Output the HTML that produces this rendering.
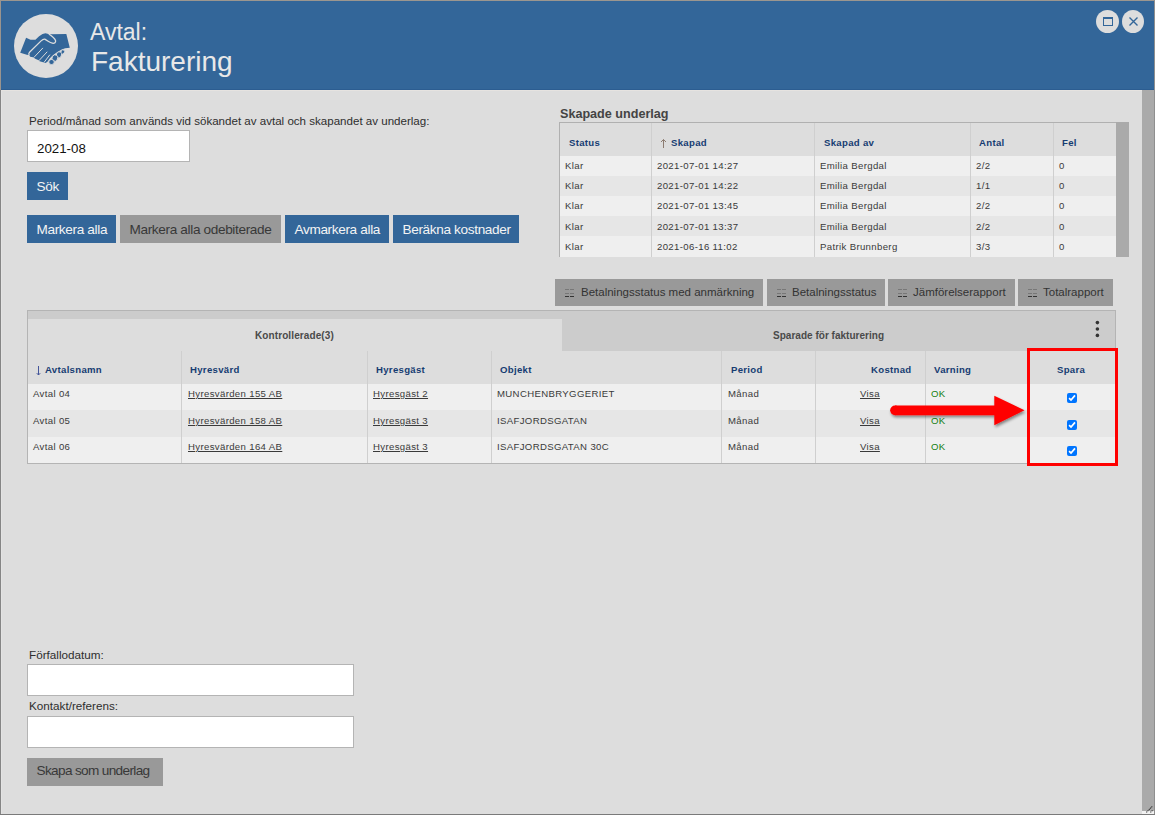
<!DOCTYPE html>
<html><head><meta charset="utf-8">
<style>
*{margin:0;padding:0;box-sizing:border-box}
html,body{width:1155px;height:815px;overflow:hidden;background:#dddddd;font-family:"Liberation Sans",sans-serif}
.a{position:absolute}
.t{position:absolute;white-space:nowrap;line-height:1}
.btn{position:absolute;top:215px;height:28px;background:#336699;color:#f4f4f4;font-size:13.6px;letter-spacing:-0.35px;line-height:29px;padding-left:9.5px;white-space:nowrap}
.gbtn{background:#999999;color:#383838}
.th{position:absolute;font-size:9.6px;letter-spacing:0.3px;font-weight:bold;color:#163c72;white-space:nowrap;line-height:1}
.td{position:absolute;font-size:9.6px;letter-spacing:0.35px;color:#3a3a3a;white-space:nowrap;line-height:1}
.lnk{text-decoration:underline}
.vs{position:absolute;width:1px;background:#cfcfcf}
</style></head>
<body>
<!-- window frame -->
<div class="a" style="left:0;top:0;width:1155px;height:1px;background:#9c968f"></div>
<div class="a" style="left:0;top:0;width:1px;height:90px;background:#9a948e"></div><div class="a" style="left:0;top:90px;width:1px;height:725px;background:#858585"></div><div class="a" style="left:1px;top:91px;width:1px;height:723px;background:#e3e3e3"></div>
<div class="a" style="left:1154px;top:0;width:1px;height:815px;background:#8f8f8f"></div>
<div class="a" style="left:0;top:814px;width:1155px;height:1px;background:#7a7a7a"></div>
<!-- header -->
<div class="a" style="left:1px;top:1px;width:1153px;height:89px;background:#336699"></div>
<div class="a" style="left:1px;top:89px;width:1153px;height:1px;background:#2c5d91"></div>
<div class="a" style="left:1px;top:90px;width:1141px;height:1px;background:#e6e3e0"></div>
<div class="a" style="left:14px;top:14px;width:64px;height:64px;border-radius:50%;background:#dddddd"></div>
<svg class="a" style="left:18px;top:28px" width="56" height="40" viewBox="0 0 1141 815">
<path d="M165 200 L255 240 L355 238 L430 170 L500 120 L560 105 L620 120 L660 128 L985 122 L1055 400 L960 415 L890 440 L800 490 L710 555 L650 615 L600 690 L560 715 L530 705 L440 675 L420 655 L340 620 L330 600 L250 585 L225 550 L180 545 L45 505 Z" fill="#336699"/>
<g fill="#336699" stroke="#dddddd" stroke-width="18">
<ellipse cx="910" cy="490" rx="36" ry="48" transform="rotate(35 910 490)"/>
<ellipse cx="834" cy="548" rx="52" ry="68" transform="rotate(30 834 548)"/>
<ellipse cx="752" cy="612" rx="58" ry="68" transform="rotate(30 752 612)"/>
<ellipse cx="683" cy="693" rx="56" ry="52"/>
</g>
<g fill="none" stroke="#dddddd" stroke-linecap="round">
<path d="M635 128 C690 165 750 215 765 255 C775 290 745 318 700 310 C650 300 600 255 545 228 C520 222 500 235 470 262 L240 490 C225 505 215 530 225 548" stroke-width="26"/>
<path d="M502 412 L335 588" stroke-width="20"/>
<path d="M590 490 L430 662" stroke-width="20"/>
<path d="M645 550 L535 695" stroke-width="20"/>
</g>
</svg>
<div class="t" style="left:90px;top:21px;font-size:23px;color:#e8e8e8">Avtal:</div>
<div class="t" style="left:91px;top:47.6px;font-size:28px;color:#e8e8e8">Fakturering</div>
<!-- window buttons -->
<div class="a" style="left:1096px;top:10px;width:23px;height:23px;border-radius:50%;background:#dddddd"></div>
<div class="a" style="left:1103px;top:17px;width:10px;height:9px;border:1px solid #336699;border-top-width:2px"></div>
<div class="a" style="left:1122px;top:10px;width:22px;height:23px;border-radius:50%;background:#dddddd"></div>
<svg class="a" style="left:1128px;top:16px" width="11" height="11" viewBox="0 0 11 11"><path d="M1.5 1.5L9.5 9.5M9.5 1.5L1.5 9.5" stroke="#336699" stroke-width="1.35"/></svg>
<!-- scrollbar -->
<div class="a" style="left:1142px;top:90px;width:12px;height:721px;background:#aaaaaa"></div>
<div class="a" style="left:1142px;top:811px;width:12px;height:3px;background:#f2f2f2"></div>
<svg class="a" style="left:1140px;top:800px" width="15" height="15" viewBox="1140 800 15 15"><path d="M1146.3 812.4L1152.6 806.1M1150.4 812.4L1152.6 810.2" stroke="#3a3a3a" stroke-width="1.1" stroke-dasharray="1.2 0.6"/></svg>

<!-- top-left form -->
<div class="t" style="left:29px;top:116px;font-size:11.57px;color:#2e2e2e">Period/månad som används vid sökandet av avtal och skapandet av underlag:</div>
<div class="a" style="left:27px;top:130px;width:163px;height:32px;background:#fff;border:1px solid #b4b4b4"></div>
<div class="t" style="left:37px;top:141.5px;font-size:13.3px;color:#111">2021-08</div>
<div class="btn" style="left:27px;top:172px;width:41px">Sök</div>
<div class="btn" style="left:27px;width:89px">Markera alla</div>
<div class="btn gbtn" style="left:120px;width:161px">Markera alla odebiterade</div>
<div class="btn" style="left:285px;width:104px">Avmarkera alla</div>
<div class="btn" style="left:393px;width:126px">Beräkna kostnader</div>

<!-- Skapade underlag -->
<div class="t" style="left:560px;top:107.5px;font-size:12.6px;font-weight:bold;color:#444">Skapade underlag</div>
<div class="a" style="left:559px;top:122px;width:570px;height:135px;background:#dddddd;border-top:1px solid #b0b0b0;border-left:1px solid #b0b0b0"></div>
<div class="a" style="left:560px;top:156px;width:556px;height:20px;background:#efefef"></div>
<div class="a" style="left:560px;top:176px;width:556px;height:20px;background:#e6e6e6"></div>
<div class="a" style="left:560px;top:196px;width:556px;height:20px;background:#efefef"></div>
<div class="a" style="left:560px;top:216px;width:556px;height:20px;background:#e6e6e6"></div>
<div class="a" style="left:560px;top:236px;width:556px;height:21px;background:#efefef"></div>
<div class="vs" style="left:651px;top:123px;height:134px"></div>
<div class="vs" style="left:814px;top:123px;height:134px"></div>
<div class="vs" style="left:970px;top:123px;height:134px"></div>
<div class="vs" style="left:1053px;top:123px;height:134px"></div>
<div class="a" style="left:1116px;top:122px;width:13px;height:135px;background:#aaaaaa"></div>
<div class="th" style="left:569px;top:138px">Status</div>
<svg class="a" style="left:659px;top:138px" width="9" height="11" viewBox="0 0 9 11"><path d="M4.5 1.5V10M2 4L4.5 1.5L7 4" stroke="#8c7b70" stroke-width="1" fill="none"/></svg>
<div class="th" style="left:671px;top:138px">Skapad</div>
<div class="th" style="left:824px;top:138px">Skapad av</div>
<div class="th" style="left:979px;top:138px">Antal</div>
<div class="th" style="left:1062px;top:138px">Fel</div>
<div class="td" style="left:565px;top:161px">Klar</div>
<div class="td" style="left:657px;top:161px">2021-07-01 14:27</div>
<div class="td" style="left:820px;top:161px">Emilia Bergdal</div>
<div class="td" style="left:976px;top:161px">2/2</div>
<div class="td" style="left:1059px;top:161px">0</div>
<div class="td" style="left:565px;top:181px">Klar</div>
<div class="td" style="left:657px;top:181px">2021-07-01 14:22</div>
<div class="td" style="left:820px;top:181px">Emilia Bergdal</div>
<div class="td" style="left:976px;top:181px">1/1</div>
<div class="td" style="left:1059px;top:181px">0</div>
<div class="td" style="left:565px;top:201px">Klar</div>
<div class="td" style="left:657px;top:201px">2021-07-01 13:45</div>
<div class="td" style="left:820px;top:201px">Emilia Bergdal</div>
<div class="td" style="left:976px;top:201px">2/2</div>
<div class="td" style="left:1059px;top:201px">0</div>
<div class="td" style="left:565px;top:222px">Klar</div>
<div class="td" style="left:657px;top:222px">2021-07-01 13:37</div>
<div class="td" style="left:820px;top:222px">Emilia Bergdal</div>
<div class="td" style="left:976px;top:222px">2/2</div>
<div class="td" style="left:1059px;top:222px">0</div>
<div class="td" style="left:565px;top:242px">Klar</div>
<div class="td" style="left:657px;top:242px">2021-06-16 11:02</div>
<div class="td" style="left:820px;top:242px">Patrik Brunnberg</div>
<div class="td" style="left:976px;top:242px">3/3</div>
<div class="td" style="left:1059px;top:242px">0</div>

<!-- report buttons -->
<div class="a" style="left:555px;top:279px;width:208px;height:27px;background:#999999"></div>
<div class="a" style="left:767px;top:279px;width:118px;height:27px;background:#999999"></div>
<div class="a" style="left:888px;top:279px;width:127px;height:27px;background:#999999"></div>
<div class="a" style="left:1018px;top:279px;width:95px;height:27px;background:#999999"></div>
<div class="t" style="left:581px;top:287px;font-size:11.5px;color:#333">Betalningsstatus med anmärkning</div>
<div class="t" style="left:792px;top:287px;font-size:11.5px;color:#333">Betalningsstatus</div>
<div class="t" style="left:913px;top:287px;font-size:11.5px;color:#333">Jämförelserapport</div>
<div class="t" style="left:1043px;top:287px;font-size:11.5px;color:#333">Totalrapport</div>
<div class="a" style="left:565px;top:289px;width:4px;height:1px;background:#777"></div><div class="a" style="left:565px;top:293px;width:4px;height:1px;background:#777"></div><div class="a" style="left:565px;top:296px;width:4px;height:1px;background:#333"></div><div class="a" style="left:570px;top:289px;width:4px;height:1px;background:#777"></div><div class="a" style="left:570px;top:293px;width:4px;height:1px;background:#777"></div><div class="a" style="left:570px;top:296px;width:4px;height:1px;background:#333"></div>
<div class="a" style="left:777px;top:289px;width:4px;height:1px;background:#777"></div><div class="a" style="left:777px;top:293px;width:4px;height:1px;background:#777"></div><div class="a" style="left:777px;top:296px;width:4px;height:1px;background:#333"></div><div class="a" style="left:782px;top:289px;width:4px;height:1px;background:#777"></div><div class="a" style="left:782px;top:293px;width:4px;height:1px;background:#777"></div><div class="a" style="left:782px;top:296px;width:4px;height:1px;background:#333"></div>
<div class="a" style="left:898px;top:289px;width:4px;height:1px;background:#777"></div><div class="a" style="left:898px;top:293px;width:4px;height:1px;background:#777"></div><div class="a" style="left:898px;top:296px;width:4px;height:1px;background:#333"></div><div class="a" style="left:903px;top:289px;width:4px;height:1px;background:#777"></div><div class="a" style="left:903px;top:293px;width:4px;height:1px;background:#777"></div><div class="a" style="left:903px;top:296px;width:4px;height:1px;background:#333"></div>
<div class="a" style="left:1028px;top:289px;width:4px;height:1px;background:#777"></div><div class="a" style="left:1028px;top:293px;width:4px;height:1px;background:#777"></div><div class="a" style="left:1028px;top:296px;width:4px;height:1px;background:#333"></div><div class="a" style="left:1033px;top:289px;width:4px;height:1px;background:#777"></div><div class="a" style="left:1033px;top:293px;width:4px;height:1px;background:#777"></div><div class="a" style="left:1033px;top:296px;width:4px;height:1px;background:#333"></div>

<!-- main tabbed table -->
<div class="a" style="left:27px;top:310px;width:1089px;height:154px;background:#dddddd;border:1px solid #b4b4b4"></div>
<div class="a" style="left:28px;top:311px;width:1087px;height:8px;background:#cccccc"></div>
<div class="a" style="left:562px;top:319px;width:553px;height:32px;background:#cccccc"></div>
<div class="t" style="left:255px;top:331px;font-size:10px;font-weight:bold;letter-spacing:0.1px;color:#4a4a4a">Kontrollerade(3)</div>
<div class="t" style="left:773px;top:331px;font-size:10px;font-weight:bold;letter-spacing:0.02px;color:#4a4a4a">Sparade för fakturering</div>
<svg class="a" style="left:1090px;top:315px" width="15" height="28" viewBox="1090 315 15 28"><g fill="#333"><circle cx="1097.4" cy="322.6" r="1.8"/><circle cx="1097.4" cy="329" r="1.8"/><circle cx="1097.4" cy="335.4" r="1.8"/></g></svg>
<div class="a" style="left:28px;top:384px;width:1087px;height:26px;background:#efefef"></div>
<div class="a" style="left:28px;top:410px;width:1087px;height:27px;background:#e6e6e6"></div>
<div class="a" style="left:28px;top:437px;width:1087px;height:26px;background:#efefef"></div>
<div class="vs" style="left:181px;top:351px;height:112px"></div>
<div class="vs" style="left:367px;top:351px;height:112px"></div>
<div class="vs" style="left:491px;top:351px;height:112px"></div>
<div class="vs" style="left:721px;top:351px;height:112px"></div>
<div class="vs" style="left:815px;top:351px;height:112px"></div>
<div class="vs" style="left:925px;top:351px;height:112px"></div>

<svg class="a" style="left:34px;top:364px" width="9" height="12" viewBox="0 0 9 12"><path d="M4.5 2V11M2.8 9.2L4.5 11L6.2 9.2" stroke="#44559a" stroke-width="1" fill="none"/></svg>
<div class="th" style="left:45px;top:365px">Avtalsnamn</div>
<div class="th" style="left:190px;top:365px">Hyresvärd</div>
<div class="th" style="left:376px;top:365px">Hyresgäst</div>
<div class="th" style="left:500px;top:365px">Objekt</div>
<div class="th" style="left:731px;top:365px">Period</div>
<div class="th" style="left:871px;top:365px">Kostnad</div>
<div class="th" style="left:934px;top:365px">Varning</div>
<div class="th" style="left:1057px;top:365px">Spara</div>
<div class="td" style="left:33px;top:389px">Avtal 04</div>
<div class="td lnk" style="left:188px;top:389px">Hyresvärden 155 AB</div>
<div class="td lnk" style="left:373px;top:389px">Hyresgäst 2</div>
<div class="td" style="left:497px;top:389px">MUNCHENBRYGGERIET</div>
<div class="td" style="left:728px;top:389px">Månad</div>
<div class="td lnk" style="left:860px;top:389px">Visa</div>
<div class="td" style="left:931px;top:389px;color:#138013">OK</div>
<svg class="a" style="left:1067px;top:393px" width="10" height="10" viewBox="0 0 10 10"><rect x="0" y="0" width="10" height="10" rx="2" fill="#0075ff"/><path d="M2.1 5.2L4 7.1L8 2.4" stroke="#fff" stroke-width="1.7" fill="none"/></svg>
<div class="td" style="left:33px;top:416px">Avtal 05</div>
<div class="td lnk" style="left:188px;top:416px">Hyresvärden 158 AB</div>
<div class="td lnk" style="left:373px;top:416px">Hyresgäst 3</div>
<div class="td" style="left:497px;top:416px">ISAFJORDSGATAN</div>
<div class="td" style="left:728px;top:416px">Månad</div>
<div class="td lnk" style="left:860px;top:416px">Visa</div>
<div class="td" style="left:931px;top:416px;color:#138013">OK</div>
<svg class="a" style="left:1067px;top:420px" width="10" height="10" viewBox="0 0 10 10"><rect x="0" y="0" width="10" height="10" rx="2" fill="#0075ff"/><path d="M2.1 5.2L4 7.1L8 2.4" stroke="#fff" stroke-width="1.7" fill="none"/></svg>
<div class="td" style="left:33px;top:442px">Avtal 06</div>
<div class="td lnk" style="left:188px;top:442px">Hyresvärden 164 AB</div>
<div class="td lnk" style="left:373px;top:442px">Hyresgäst 3</div>
<div class="td" style="left:497px;top:442px">ISAFJORDSGATAN 30C</div>
<div class="td" style="left:728px;top:442px">Månad</div>
<div class="td lnk" style="left:860px;top:442px">Visa</div>
<div class="td" style="left:931px;top:442px;color:#138013">OK</div>
<svg class="a" style="left:1067px;top:446px" width="10" height="10" viewBox="0 0 10 10"><rect x="0" y="0" width="10" height="10" rx="2" fill="#0075ff"/><path d="M2.1 5.2L4 7.1L8 2.4" stroke="#fff" stroke-width="1.7" fill="none"/></svg>

<!-- red highlight box + arrow -->
<div class="a" style="left:1027px;top:348px;width:91px;height:118px;border:3px solid #ff0000"></div>
<svg class="a" style="left:885px;top:390px" width="150" height="45" viewBox="0 0 150 45">
<defs><filter id="sh" x="-10%" y="-30%" width="130%" height="170%"><feGaussianBlur in="SourceAlpha" stdDeviation="1.5"/><feOffset dx="1" dy="2"/><feComponentTransfer><feFuncA type="linear" slope="0.45"/></feComponentTransfer><feMerge><feMergeNode/><feMergeNode in="SourceGraphic"/></feMerge></filter></defs>
<g filter="url(#sh)">
<path d="M10 15.5 L109.3 15.5 L109.3 5.8 L139.5 20.3 L109.3 35.2 L109.3 25.2 L10 25.2 Z" fill="#ff0000"/>
<circle cx="10" cy="20.35" r="4.85" fill="#ff0000"/>
</g>
</svg>

<!-- bottom form -->
<div class="t" style="left:29px;top:649px;font-size:11.7px;color:#2e2e2e">Förfallodatum:</div>
<div class="a" style="left:27px;top:664px;width:327px;height:32px;background:#fff;border:1px solid #b4b4b4"></div>
<div class="t" style="left:29px;top:700px;font-size:11.7px;color:#2e2e2e">Kontakt/referens:</div>
<div class="a" style="left:27px;top:716px;width:327px;height:32px;background:#fff;border:1px solid #b4b4b4"></div>
<div class="btn gbtn" style="left:27px;top:758px;width:136px;height:28px;line-height:26px;letter-spacing:-0.65px;color:#383838">Skapa som underlag</div>

</body></html>
